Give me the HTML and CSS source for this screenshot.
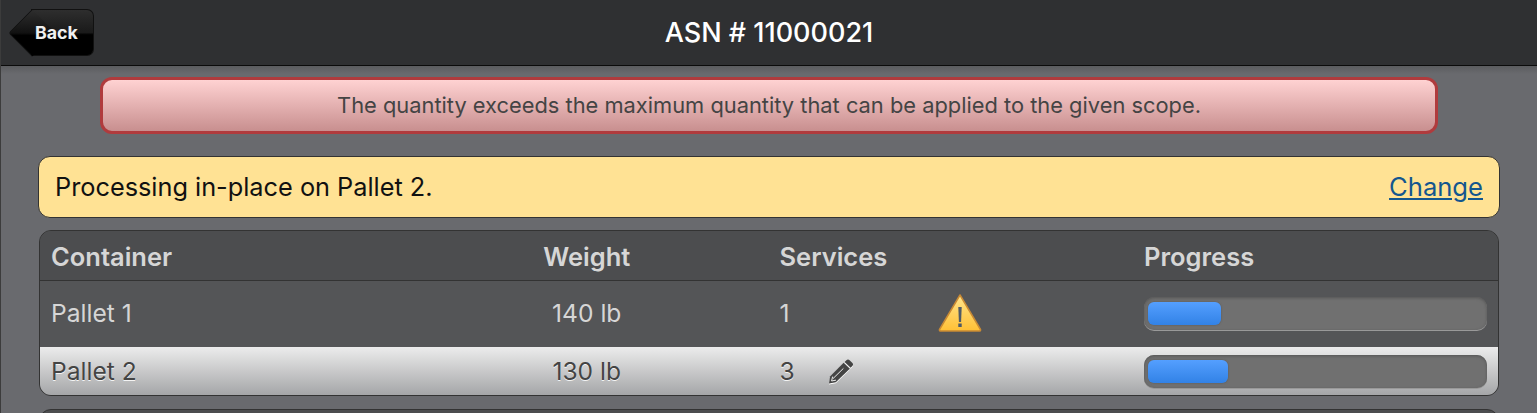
FILE: index.html
```html
<!DOCTYPE html>
<html lang="en">
<head>
  <meta charset="UTF-8">
  <meta name="viewport" content="width=device-width, initial-scale=1.0">
  <title>ASN # 11000021</title>
  <link rel="stylesheet" href="styles.css">
</head>
<body>
  <header class="topbar">
    <a class="back" href="#"><span>Back</span></a>
    <h1>ASN # 11000021</h1>
  </header>

  <main class="content">
    <div class="alert">The quantity exceeds the maximum quantity that can be applied to the given scope.</div>

    <div class="banner">
      <span>Processing in-place on Pallet 2.</span>
      <a href="#">Change</a>
    </div>

    <section class="panel">
      <div class="row head">
        <div>Container</div>
        <div class="center">Weight</div>
        <div class="col-services">Services</div>
        <div class="progress-cell">Progress</div>
      </div>
      <div class="row first">
        <div>Pallet 1</div>
        <div class="center">140 lb</div>
        <div class="col-services services">
          <span class="count">1</span>
          <span class="edit-slot"></span>
          <svg class="warn" width="44" height="38" viewBox="0 0 44 38">
            <defs>
              <linearGradient id="warnFill" x1="0" y1="0" x2="0" y2="1">
                <stop offset="0" stop-color="#ffe58c"/>
                <stop offset="1" stop-color="#ffc035"/>
              </linearGradient>
            </defs>
            <path d="M22 1 L42.5 35.5 Q43 37 41 37 L3 37 Q1 37 1.5 35.5 Z" fill="url(#warnFill)" stroke="#c98a34" stroke-width="1.5" stroke-linejoin="round"/>
            <path d="M20.3 13 h3.4 l-.6 15 h-2.2 Z" fill="#4f5a66"/>
            <rect x="20.3" y="29.5" width="3.4" height="3.5" fill="#4f5a66"/>
          </svg>
        </div>
        <div class="progress-cell"><div class="bar"><div class="fill" style="width: 73px"></div></div></div>
      </div>
      <div class="row selected">
        <div>Pallet 2</div>
        <div class="center">130 lb</div>
        <div class="col-services services">
          <span class="count">3</span>
          <svg class="pencil" width="26" height="26" viewBox="0 0 26 26">
            <path d="M18.4 2.2 Q20 .6 21.6 2.2 L24.4 5 Q25.8 6.5 24.3 8 L22.6 9.8 L16.6 3.9 Z" fill="#444"/>
            <path d="M15.6 4.8 L21.8 10.8 L7.8 24.2 L1 25.6 L2 18.4 Z" fill="#444"/>
            <path d="M4.6 18.6 L3.6 23 L8 22.1 M5 20.6 L15.4 10.4" fill="none" stroke="#eee" stroke-width="1"/>
          </svg>
        </div>
        <div class="progress-cell"><div class="bar"><div class="fill" style="width: 80px"></div></div></div>
      </div>
    </section>

    <section class="panel next"></section>
  </main>
</body>
</html>
```

FILE: styles.css
```css
* { margin: 0; padding: 0; box-sizing: border-box; }
html, body { height: 100%; overflow: hidden; }
body { font-family: Inter, sans-serif; background: #696a6e; color: #e8e8e8; border-left: 1px solid #3c3c3c; }

.topbar {
  position: relative;
  height: 66px;
  background: #2f3032;
  border-bottom: 1px solid #0b0b0b;
  display: flex;
  align-items: center;
  justify-content: center;
}

.topbar h1 {
  font-size: 27px;
  font-weight: 500;
  color: #fff;
  margin-top: -1px;
}

.back {
  position: absolute;
  left: 30px;
  top: 9px;
  width: 63px;
  height: 47px;
  background: linear-gradient(#2e2e2e, #1a1a1a 50%, #000 55%, #000);
  border: 1px solid #111;
  border-left: none;
  border-radius: 0 7px 7px 0;
  color: #f0f0f0;
  font-size: 17.8px;
  font-weight: 700;
  text-decoration: none;
  display: flex;
  align-items: center;
}

.back span { position: relative; margin-left: 4px; }

.back::before {
  content: "";
  position: absolute;
  left: -16px;
  top: 6px;
  width: 33px;
  height: 33px;
  transform: rotate(45deg);
  background: linear-gradient(135deg, #2e2e2e, #111 50%, #000 55%);
  border-left: 1px solid #111;
  border-bottom: 1px solid #111;
  border-radius: 0 0 0 4px;
}

.content {
  height: calc(100% - 66px);
  background: linear-gradient(#5b5c5f, #696a6e 8px);
  padding: 11px 37px 0;
}

.alert {
  margin: 0 62px;
  height: 57px;
  padding-bottom: 2px;
  border: 3px solid #b03b3d;
  border-radius: 12px;
  background: linear-gradient(#ffd2d2, #c88f8f);
  color: #444;
  font-size: 21.85px;
  display: flex;
  align-items: center;
  justify-content: center;
}

.banner {
  margin-top: 22px;
  height: 62px;
  padding: 0 16px 2px;
  background: #ffe294;
  border: 1px solid #333;
  border-radius: 12px;
  color: #111;
  font-size: 25.3px;
  display: flex;
  align-items: center;
  justify-content: space-between;
}

.banner a { color: #13568f; font-size: 25.6px; }

.panel {
  margin: 12px 1px 0;
  background: #545557;
  border: 1px solid #333;
  border-radius: 12px;
  overflow: hidden;
}

.row {
  display: grid;
  grid-template-columns: repeat(4, 1fr);
  align-items: center;
  font-size: 24.6px;
  color: #d6d6d6;
}

.row > div { padding: 0 11px; }
.row > .col-services, .row > .progress-cell { padding-left: 10.5px; }
.row .center { text-align: center; }

.head {
  height: 50px;
  padding-top: 2px;
  background: #4c4d4f;
  border-bottom: 1px solid #333;
  font-size: 25.5px;
  font-weight: 600;
}

.first { height: 66px; padding-bottom: 2px; }
.first .bar { margin-top: 8px; margin-bottom: 8px; }

.selected {
  height: 48px;
  background: linear-gradient(#ececec, #a5a6a8);
  color: #444;
  text-shadow: 0 1px 0 #f4f4f4;
}

.services { display: flex; align-items: center; }
.count { width: 48px; }
.edit-slot { width: 110px; }
.warn { display: block; }
.pencil { display: block; filter: drop-shadow(0 1px 0 #fff); }

.bar {
  height: 33px;
  padding: 5px 4px;
  background: #707070;
  border-radius: 10px;
  box-shadow: inset 0 1px 3px #555, 0 1px 0 #999;
}

.fill {
  height: 100%;
  background: linear-gradient(#549fff, #3282e6);
  border-radius: 6px;
  box-shadow: 0 0 2px #555;
}

.next { margin-top: 13px; height: 60px; background: #4c4d4f; }
```
